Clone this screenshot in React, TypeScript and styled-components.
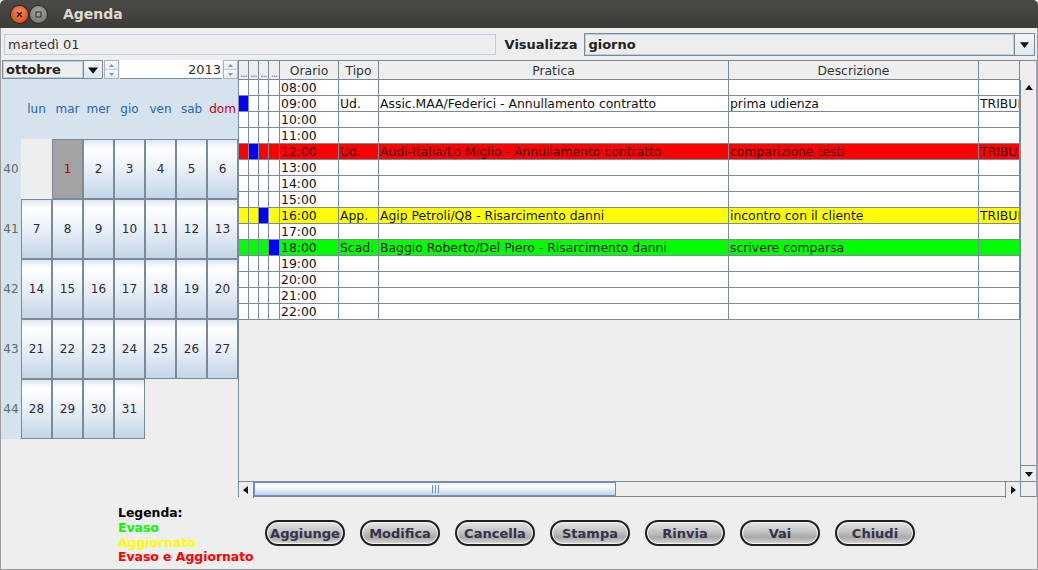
import React from 'react';
import styled, { createGlobalStyle } from 'styled-components';

const GlobalStyle = createGlobalStyle`
    html, body {
        margin: 0;
        padding: 0;
        background: #eeeeee;
    }
    * {
        box-sizing: border-box;
    }
`;

const GRID = '#7a8a99';
const FONT = '"DejaVu Sans", "Liberation Sans", sans-serif';

const Window = styled.div`
    width: 1038px;
    height: 570px;
    display: flex;
    flex-direction: column;
    background: #eeeeee;
    font-family: ${FONT};
    font-size: 12px;
    color: #222;
    overflow: hidden;
`;

const TitleBar = styled.div`
    height: 28px;
    flex: none;
    display: flex;
    align-items: center;
    padding-left: 11px;
    gap: 2px;
    background: linear-gradient(#4b4a46, #3c3b37);
    border-radius: 5px 5px 0 0;
`;

const WinButton = styled.div<{ $close?: boolean }>`
    width: 17px;
    height: 17px;
    border-radius: 50%;
    display: flex;
    align-items: center;
    justify-content: center;
    background: ${(p) =>
        p.$close
            ? 'radial-gradient(circle at 50% 35%, #f78d63, #e2531f 70%, #b53c12)'
            : 'radial-gradient(circle at 50% 35%, #a8a7a2, #7f7e79 70%, #5e5d59)'};
    box-shadow: 0 0 0 1px #2c2b28;
`;

const Title = styled.div`
    margin-left: 14px;
    color: #dfdbd2;
    font-weight: bold;
    font-size: 14px;
`;

const Body = styled.div`
    flex: 1;
    display: flex;
    flex-direction: column;
    border: 1px solid #9c9c9c;
    border-top: none;
`;

const TopRow = styled.div`
    height: 31px;
    flex: none;
    display: flex;
    align-items: center;
    padding: 2px 2px 0 3px;
`;

const DateField = styled.div`
    width: 492px;
    height: 21px;
    border: 1px solid #b8cfe5;
    padding-left: 3px;
    display: flex;
    align-items: center;
    font-size: 13px;
    color: #333;
`;

const Label = styled.div`
    font-weight: bold;
    font-size: 13px;
    color: #222;
    margin: 0 7px 0 9px;
`;

const Combo = styled.div<{ $width: number; $height: number }>`
    width: ${(p) => p.$width}px;
    height: ${(p) => p.$height}px;
    border: 1px solid ${GRID};
    display: flex;
    align-items: stretch;
    background: #eeeeee;
`;

const ComboText = styled.div`
    flex: 1;
    display: flex;
    align-items: center;
    padding-left: 3px;
    font-weight: bold;
    font-size: 13px;
    color: #222;
    box-shadow: inset 0 0 0 1px #b8cfe5;
`;

const ComboArrow = styled.div<{ $width: number }>`
    width: ${(p) => p.$width}px;
    border-left: 1px solid ${GRID};
    display: flex;
    align-items: center;
    justify-content: center;
    background: linear-gradient(#f4f8fb, #dce6ef);
`;

const Main = styled.div`
    flex: 1;
    display: flex;
    min-height: 0;
    margin-top: 1px;
`;

const LeftPanel = styled.div`
    width: 237px;
    flex: none;
    display: flex;
    flex-direction: column;
`;

const CalendarBar = styled.div`
    height: 19px;
    display: flex;
    align-items: stretch;
    padding-left: 1px;
`;

const Spinner = styled.div`
    width: 15px;
    display: flex;
    flex-direction: column;
    border: 1px solid #a9b6c2;
    margin-left: 1px;
`;

const SpinHalf = styled.div`
    flex: 1;
    display: flex;
    align-items: center;
    justify-content: center;
    background: linear-gradient(#f8fafc, #e4ebf1);
    & + & {
        border-top: 1px solid #c4ced8;
    }
`;

const YearField = styled.div`
    width: 102px;
    margin-left: 1px;
    background: #fff;
    border-bottom: 1px solid ${GRID};
    display: flex;
    align-items: center;
    justify-content: flex-end;
    font-size: 13px;
    color: #333;
    padding-right: 1px;
`;

const Calendar = styled.div`
    display: grid;
    grid-template-columns: 20px repeat(7, 31px);
    grid-template-rows: repeat(6, 60px);
`;

const HeadCell = styled.div<{ $sunday?: boolean }>`
    background: #d4e3ed;
    display: flex;
    align-items: center;
    justify-content: center;
    color: ${(p) => (p.$sunday ? '#c00018' : '#2e62b4')};
    font-size: 12px;
`;

const WeekCell = styled.div`
    background: #d4e3ed;
    display: flex;
    align-items: center;
    justify-content: center;
    color: #666;
    font-size: 12px;
`;

const EmptyCell = styled.div`
    background: #eeeeee;
`;

const DayCell = styled.div<{ $selected?: boolean }>`
    border: 1px solid ${GRID};
    display: flex;
    align-items: center;
    justify-content: center;
    font-size: 12px;
    color: ${(p) => (p.$selected ? '#b00010' : '#2c2a3a')};
    background: ${(p) =>
        p.$selected
            ? '#a3a3a3'
            : 'linear-gradient(#dde7f1 0%, #ffffff 14%, #e6eef6 55%, #c3d5e7 100%)'};
`;

const ScrollPane = styled.div`
    flex: 1;
    border: 1px solid ${GRID};
    border-right-color: #9aa6b1;
    display: grid;
    grid-template-columns: 1fr 16px;
    grid-template-rows: 19px 1fr 15px;
    min-width: 0;
`;

const HeaderRow = styled.div`
    grid-column: 1 / 3;
    display: flex;
    background: #eeeeee;
`;

const HeaderCell = styled.div<{ $w: number }>`
    width: ${(p) => p.$w}px;
    flex: none;
    border-right: 1px solid ${GRID};
    border-bottom: 1px solid ${GRID};
    display: flex;
    align-items: center;
    justify-content: center;
    color: #333;
    font-size: 12.4px;
    overflow: hidden;
    white-space: nowrap;
`;

const Dots = styled.span`
    color: #8a5aa0;
    letter-spacing: -1px;
    font-size: 10px;
    margin-top: 6px;
`;

const HeaderCorner = styled.div`
    flex: 1;
`;

const Viewport = styled.div`
    overflow: hidden;
    background: #eeeeee;
    min-width: 0;
`;

const Row = styled.div<{ $bg: string }>`
    display: flex;
    height: 16px;
    background: ${(p) => p.$bg};
`;

const Cell = styled.div<{ $w: number; $mark?: boolean; $color?: string }>`
    width: ${(p) => p.$w}px;
    flex: none;
    border-right: 1px solid ${GRID};
    border-bottom: 1px solid ${GRID};
    background: ${(p) => (p.$mark ? '#0000ff' : 'transparent')};
    padding-left: 1px;
    line-height: 16px;
    font-size: 12.4px;
    color: ${(p) => p.$color || '#111'};
    white-space: nowrap;
    overflow: hidden;
`;

const VScroll = styled.div`
    border-left: 1px solid ${GRID};
    display: flex;
    flex-direction: column;
    justify-content: space-between;
    background: #eeeeee;
`;

const ArrowBox = styled.div<{ $side?: 'top' | 'bottom' | 'left' | 'right' }>`
    width: 15px;
    height: 16px;
    flex: none;
    display: flex;
    align-items: center;
    justify-content: center;
    background: #eeeeee;
    ${(p) => (p.$side === 'bottom' ? `border-top: 1px solid ${GRID};` : '')}
    ${(p) => (p.$side === 'left' ? `border-right: 1px solid ${GRID};` : '')}
    ${(p) => (p.$side === 'right' ? `border-left: 1px solid ${GRID};` : '')}
`;

const HScroll = styled.div`
    border-top: 1px solid ${GRID};
    display: flex;
    align-items: stretch;
    background: #eeeeee;
`;

const HTrack = styled.div`
    flex: 1;
    display: flex;
`;

const Thumb = styled.div`
    width: 362px;
    border: 1px solid #6b8fcf;
    background: linear-gradient(#e8f0f8, #ffffff 30%, #d8e4f0 70%, #c2d4e8);
    display: flex;
    align-items: center;
    justify-content: center;
    gap: 2px;
`;

const Grip = styled.div`
    width: 1px;
    height: 8px;
    background: #6b8fcf;
`;

const Corner = styled.div`
    border-top: 1px solid ${GRID};
    border-left: 1px solid ${GRID};
    background: #eeeeee;
`;

const Footer = styled.div`
    height: 72px;
    flex: none;
    display: flex;
    align-items: center;
    padding-left: 117px;
`;

const Legend = styled.div`
    width: 147px;
    font-weight: bold;
    font-size: 12.4px;
    line-height: 14.8px;
    margin-top: 5px;
`;

const LegendItem = styled.div<{ $color: string }>`
    color: ${(p) => p.$color};
    white-space: nowrap;
`;

const Buttons = styled.div`
    display: flex;
    gap: 15px;
`;

const PillButton = styled.button`
    width: 80px;
    height: 26px;
    border-radius: 13px;
    border: 2px solid #1e1e1e;
    background: linear-gradient(#e6e6e6 0%, #c2c2c2 45%, #a9a9a9 70%, #d8d8d8 100%);
    box-shadow: inset 0 0 0 1px #f4f4f4;
    font-family: ${FONT};
    font-weight: bold;
    font-size: 13px;
    color: #33334a;
    padding: 0;
`;

const Tri = ({ dir, size = 8 }: { dir: 'up' | 'down' | 'left' | 'right'; size?: number }) => {
    const pts = {
        up: '0,6 8,6 4,1',
        down: '0,2 8,2 4,7',
        left: '6,0 6,8 1,4',
        right: '2,0 2,8 7,4',
    }[dir];
    return (
        <svg width={size} height={size} viewBox="0 0 8 8">
            <polygon points={pts} fill="#111" />
        </svg>
    );
};

const SmallTri = ({ dir }: { dir: 'up' | 'down' }) => (
    <svg width="5" height="3" viewBox="0 0 5 3">
        <polygon points={dir === 'up' ? '0,3 5,3 2.5,0' : '0,0 5,0 2.5,3'} fill="#8a96a2" />
    </svg>
);

const COLS = [10, 10, 10, 11, 59, 40, 350, 250, 41];

interface Appointment {
    hour: string;
    tipo?: string;
    pratica?: string;
    descrizione?: string;
    sede?: string;
    bg?: string;
    mark?: number;
    color?: string;
}

const HOURS: Appointment[] = [
    { hour: '08:00' },
    {
        hour: '09:00',
        tipo: 'Ud.',
        pratica: 'Assic.MAA/Federici - Annullamento contratto',
        descrizione: 'prima udienza',
        sede: 'TRIBUNALE',
        mark: 0,
    },
    { hour: '10:00' },
    { hour: '11:00' },
    {
        hour: '12:00',
        tipo: 'Ud.',
        pratica: 'Audi-Italia/Lo Miglio - Annullamento contratto',
        descrizione: 'comparizione testi',
        sede: 'TRIBUNALE',
        bg: '#ff0000',
        mark: 1,
        color: '#3a0000',
    },
    { hour: '13:00' },
    { hour: '14:00' },
    { hour: '15:00' },
    {
        hour: '16:00',
        tipo: 'App.',
        pratica: 'Agip Petroli/Q8 - Risarcimento danni',
        descrizione: 'incontro con il cliente',
        sede: 'TRIBUNALE',
        bg: '#ffff00',
        mark: 2,
    },
    { hour: '17:00' },
    {
        hour: '18:00',
        tipo: 'Scad.',
        pratica: 'Baggio Roberto/Del Piero - Risarcimento danni',
        descrizione: 'scrivere comparsa',
        bg: '#00ff00',
        mark: 3,
    },
    { hour: '19:00' },
    { hour: '20:00' },
    { hour: '21:00' },
    { hour: '22:00' },
];

const WEEKDAYS = ['lun', 'mar', 'mer', 'gio', 'ven', 'sab', 'dom'];

// ottobre 2013 starts on tuesday
const WEEKS: (number | null)[][] = [
    [null, 1, 2, 3, 4, 5, 6],
    [7, 8, 9, 10, 11, 12, 13],
    [14, 15, 16, 17, 18, 19, 20],
    [21, 22, 23, 24, 25, 26, 27],
    [28, 29, 30, 31, null, null, null],
];

const BUTTONS = ['Aggiunge', 'Modifica', 'Cancella', 'Stampa', 'Rinvia', 'Vai', 'Chiudi'];

export default function App() {
    return (
        <>
            <GlobalStyle />
            <Window>
                <TitleBar>
                    <WinButton $close>
                        <svg width="7" height="7" viewBox="0 0 7 7">
                            <path d="M1 1 L6 6 M6 1 L1 6" stroke="#3b1a0c" strokeWidth="1.6" />
                        </svg>
                    </WinButton>
                    <WinButton>
                        <svg width="7" height="7" viewBox="0 0 7 7">
                            <rect x="1" y="1" width="5" height="5" fill="none" stroke="#3a3a37" strokeWidth="1.2" />
                        </svg>
                    </WinButton>
                    <Title>Agenda</Title>
                </TitleBar>
                <Body>
                    <TopRow>
                        <DateField>martedì 01</DateField>
                        <Label>Visualizza</Label>
                        <Combo $width={451} $height={23}>
                            <ComboText>giorno</ComboText>
                            <ComboArrow $width={20}>
                                <Tri dir="down" size={9} />
                            </ComboArrow>
                        </Combo>
                    </TopRow>
                    <Main>
                        <LeftPanel>
                            <CalendarBar>
                                <Combo $width={101} $height={19}>
                                    <ComboText>ottobre</ComboText>
                                    <ComboArrow $width={19}>
                                        <Tri dir="down" size={10} />
                                    </ComboArrow>
                                </Combo>
                                <Spinner>
                                    <SpinHalf>
                                        <SmallTri dir="up" />
                                    </SpinHalf>
                                    <SpinHalf>
                                        <SmallTri dir="down" />
                                    </SpinHalf>
                                </Spinner>
                                <YearField>2013</YearField>
                                <Spinner>
                                    <SpinHalf>
                                        <SmallTri dir="up" />
                                    </SpinHalf>
                                    <SpinHalf>
                                        <SmallTri dir="down" />
                                    </SpinHalf>
                                </Spinner>
                            </CalendarBar>
                            <Calendar>
                                <WeekCell />
                                {WEEKDAYS.map((d) => (
                                    <HeadCell key={d} $sunday={d === 'dom'}>
                                        {d}
                                    </HeadCell>
                                ))}
                                {WEEKS.map((week, i) => (
                                    <React.Fragment key={i}>
                                        <WeekCell>{40 + i}</WeekCell>
                                        {week.map((day, j) =>
                                            day === null ? (
                                                <EmptyCell key={j} />
                                            ) : (
                                                <DayCell key={j} $selected={day === 1}>
                                                    {day}
                                                </DayCell>
                                            ),
                                        )}
                                    </React.Fragment>
                                ))}
                            </Calendar>
                        </LeftPanel>
                        <ScrollPane>
                            <HeaderRow>
                                {[0, 1, 2, 3].map((i) => (
                                    <HeaderCell key={i} $w={COLS[i]}>
                                        <Dots>...</Dots>
                                    </HeaderCell>
                                ))}
                                <HeaderCell $w={COLS[4]}>Orario</HeaderCell>
                                <HeaderCell $w={COLS[5]}>Tipo</HeaderCell>
                                <HeaderCell $w={COLS[6]}>Pratica</HeaderCell>
                                <HeaderCell $w={COLS[7]}>Descrizione</HeaderCell>
                                <HeaderCell $w={COLS[8]} />
                                <HeaderCorner />
                            </HeaderRow>
                            <Viewport>
                                {HOURS.map((a) => (
                                    <Row key={a.hour} $bg={a.bg || '#ffffff'}>
                                        {[0, 1, 2, 3].map((i) => (
                                            <Cell key={i} $w={COLS[i]} $mark={a.mark === i} />
                                        ))}
                                        <Cell $w={COLS[4]} $color={a.color}>
                                            {a.hour}
                                        </Cell>
                                        <Cell $w={COLS[5]} $color={a.color}>
                                            {a.tipo}
                                        </Cell>
                                        <Cell $w={COLS[6]} $color={a.color}>
                                            {a.pratica}
                                        </Cell>
                                        <Cell $w={COLS[7]} $color={a.color}>
                                            {a.descrizione}
                                        </Cell>
                                        <Cell $w={COLS[8]} $color={a.color}>
                                            {a.sede}
                                        </Cell>
                                    </Row>
                                ))}
                            </Viewport>
                            <VScroll>
                                <ArrowBox $side="top">
                                    <Tri dir="up" />
                                </ArrowBox>
                                <ArrowBox $side="bottom">
                                    <Tri dir="down" />
                                </ArrowBox>
                            </VScroll>
                            <HScroll>
                                <ArrowBox $side="left">
                                    <Tri dir="left" />
                                </ArrowBox>
                                <HTrack>
                                    <Thumb>
                                        <Grip />
                                        <Grip />
                                        <Grip />
                                    </Thumb>
                                </HTrack>
                                <ArrowBox $side="right">
                                    <Tri dir="right" />
                                </ArrowBox>
                            </HScroll>
                            <Corner />
                        </ScrollPane>
                    </Main>
                    <Footer>
                        <Legend>
                            <LegendItem $color="#000">Legenda:</LegendItem>
                            <LegendItem $color="#00ff00">Evaso</LegendItem>
                            <LegendItem $color="#ffff00">Aggiornato</LegendItem>
                            <LegendItem $color="#ff0000">Evaso e Aggiornato</LegendItem>
                        </Legend>
                        <Buttons>
                            {BUTTONS.map((b) => (
                                <PillButton key={b}>{b}</PillButton>
                            ))}
                        </Buttons>
                    </Footer>
                </Body>
            </Window>
        </>
    );
}
